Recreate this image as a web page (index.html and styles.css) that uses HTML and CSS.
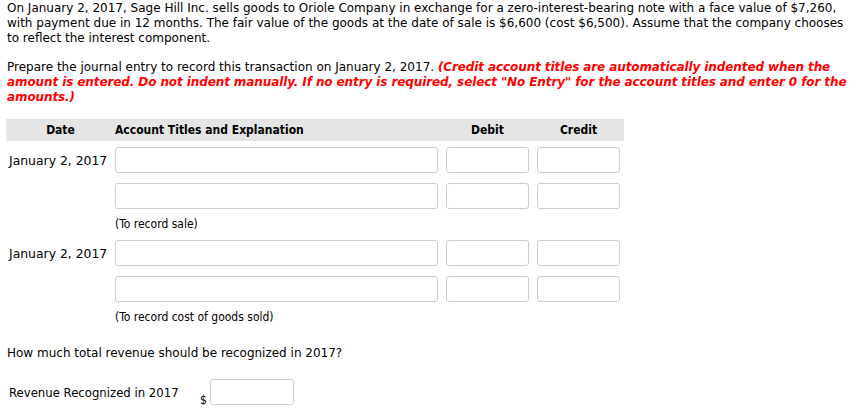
FILE: index.html
```html
<!DOCTYPE html>
<html>
<head>
<meta charset="utf-8">
<link rel="stylesheet" href="styles.css">
</head>
<body>
<div class="page">
  <p class="intro">On January 2, 2017, Sage Hill Inc. sells goods to Oriole Company in exchange for a zero-interest-bearing note with a face value of $7,260, with payment due in 12 months. The fair value of the goods at the date of sale is $6,600 (cost $6,500). Assume that the company chooses to reflect the interest component.</p>
  <p class="instr">Prepare the journal entry to record this transaction on January 2, 2017. <span class="red">(Credit account titles are automatically indented when the amount is entered. Do not indent manually. If no entry is required, select "No Entry" for the account titles and enter 0 for the amounts.)</span></p>

  <div class="journal">
    <div class="jhead">
      <div class="h-date">Date</div>
      <div class="h-acct">Account Titles and Explanation</div>
      <div class="h-amt">Debit</div>
      <div class="h-amt">Credit</div>
    </div>

    <div class="jrow first">
      <div class="date">January 2, 2017</div>
      <div class="box acct"></div>
      <div class="box amt"></div>
      <div class="box amt"></div>
    </div>
    <div class="jrow">
      <div class="date"></div>
      <div class="box acct"></div>
      <div class="box amt"></div>
      <div class="box amt"></div>
    </div>
    <div class="expl">(To record sale)</div>

    <div class="jrow first">
      <div class="date">January 2, 2017</div>
      <div class="box acct"></div>
      <div class="box amt"></div>
      <div class="box amt"></div>
    </div>
    <div class="jrow">
      <div class="date"></div>
      <div class="box acct"></div>
      <div class="box amt"></div>
      <div class="box amt"></div>
    </div>
    <div class="expl">(To record cost of goods sold)</div>
  </div>

  <p class="question">How much total revenue should be recognized in 2017?</p>

  <div class="answer">
    <div class="alabel">Revenue Recognized in 2017</div>
    <div class="dollar">$</div>
    <div class="box rev"></div>
  </div>
</div>
</body>
</html>
```

FILE: styles.css
```css
html, body {
  margin: 0;
  padding: 0;
  background: #fff;
}
.page {
  padding: 1px 7px 0 7px;
  font-family: "DejaVu Sans", Verdana, sans-serif;
  font-size: 12px;
  line-height: 15px;
  color: #000;
}
p {
  margin: 0;
}
.intro {
  margin-bottom: 14px;
}
.red {
  color: #ff0000;
  font-weight: bold;
  font-style: italic;
  letter-spacing: -0.1px;
}
.journal {
  margin-top: 14px;
  margin-left: -1px;
  width: 618px;
}
.jhead, .jrow {
  display: grid;
  grid-template-columns: 101px 323px 83px 83px;
  column-gap: 8px;
  align-items: center;
}
.jhead {
  background: #e5e5e5;
  height: 22px;
  font-family: "DejaVu Sans Condensed", Tahoma, sans-serif;
  font-weight: bold;
  font-size: 12px;
}
.h-date {
  text-align: center;
  margin-right: -8px;
}
.h-amt {
  text-align: center;
}
.jrow {
  margin-top: 10px;
}
.jrow.first {
  margin-top: 6px;
}
.date {
  padding-left: 3px;
  font-size: 12.4px;
  white-space: nowrap;
}
.box {
  height: 24px;
  border: 1px solid #cccccc;
  border-radius: 3px;
  background: #fff;
}
.expl {
  margin-left: 109px;
  margin-top: 8px;
  margin-bottom: 9px;
  font-family: "DejaVu Sans Condensed", Tahoma, sans-serif;
  font-size: 12px;
  line-height: 14px;
}
.question {
  margin-top: 22px;
  font-size: 12px;
}
.answer {
  display: flex;
  align-items: flex-end;
  margin-top: 18px;
  margin-left: 2px;
}
.alabel {
  font-family: "DejaVu Sans Condensed", Tahoma, sans-serif;
  font-size: 13px;
  width: 191px;
  align-self: center;
}
.dollar {
  font-family: "DejaVu Sans Condensed", Tahoma, sans-serif;
  font-size: 12px;
  width: 10px;
  line-height: 14px;
  margin-bottom: -2px;
}
.box.rev {
  width: 82px;
}
```
